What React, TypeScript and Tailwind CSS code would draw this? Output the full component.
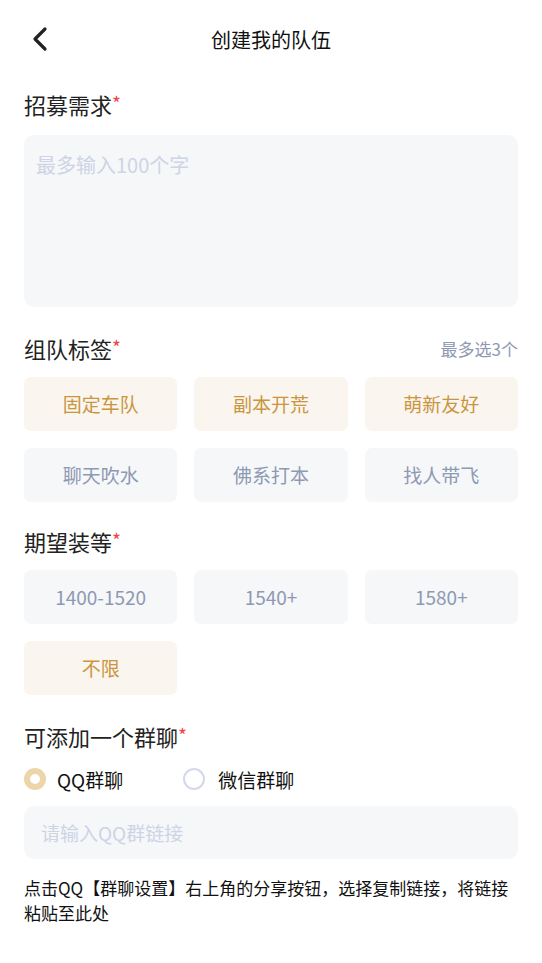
import React from "react";

const font = { fontFamily: '"Noto Sans CJK SC", "Noto Sans", sans-serif' };

function Tag({ label, active }: { label: string; active?: boolean }) {
  return (
    <div
      className={
        "h-[54px] rounded-[7px] flex items-center justify-center text-[19px] " +
        (active ? "bg-[#faf5ef] text-[#c9963f]" : "bg-[#f6f7f9] text-[#8e99b3]")
      }
    >
      {label}
    </div>
  );
}

function Title({ text }: { text: string }) {
  return (
    <div className="text-[22px] text-[#222] leading-none flex items-start">
      <span>{text}</span>
      <span className="text-[#f0444a] text-[19px] leading-none">*</span>
    </div>
  );
}

export default function App() {
  return (
    <div className="w-[542px] h-[963px] bg-white" style={font}>
      <div className="relative h-[80px] flex items-center justify-center">
        <svg className="absolute left-[30px] top-[26px]" width="20" height="26" viewBox="0 0 20 26">
          <path d="M15 3 L5 13 L15 23" fill="none" stroke="#222" strokeWidth="3.2" strokeLinecap="round" strokeLinejoin="round" />
        </svg>
        <div className="text-[20px] text-[#111] leading-none">创建我的队伍</div>
      </div>

      <div className="px-[24px]">
        <div className="mt-[13px]">
          <Title text="招募需求" />
        </div>
        <div className="mt-[20px] h-[172px] rounded-[10px] bg-[#f6f7f9] px-[12px] pt-[20px]">
          <div className="text-[20px] text-[#cdd4e6] leading-none">最多输入100个字</div>
        </div>

        <div className="mt-[30px] flex items-center justify-between">
          <Title text="组队标签" />
          <div className="text-[17px] text-[#8e99b3] leading-none">最多选3个</div>
        </div>
        <div className="mt-[18px] grid grid-cols-3 gap-x-[17px] gap-y-[17px]">
          <Tag label="固定车队" active />
          <Tag label="副本开荒" active />
          <Tag label="萌新友好" active />
          <Tag label="聊天吹水" />
          <Tag label="佛系打本" />
          <Tag label="找人带飞" />
        </div>

        <div className="mt-[28px]">
          <Title text="期望装等" />
        </div>
        <div className="mt-[18px] grid grid-cols-3 gap-x-[17px] gap-y-[17px]">
          <Tag label="1400-1520" />
          <Tag label="1540+" />
          <Tag label="1580+" />
          <Tag label="不限" active />
        </div>

        <div className="mt-[30px]">
          <Title text="可添加一个群聊" />
        </div>
        <div className="mt-[20px] flex items-center h-[24px]">
          <div className="w-[22px] h-[22px] rounded-full border-[6px] border-[#ecd5a9] bg-white" />
          <div className="ml-[11px] text-[19px] text-[#111] leading-none">QQ群聊</div>
          <div className="ml-[60px] w-[22px] h-[22px] rounded-full border-2 border-[#d3d9ea] bg-white" />
          <div className="ml-[13px] text-[19px] text-[#111] leading-none">微信群聊</div>
        </div>
        <div className="mt-[15px] h-[53px] rounded-[10px] bg-[#f6f7f9] px-[17px] flex items-center">
          <div className="text-[19px] text-[#cdd4e6] leading-none">请输入QQ群链接</div>
        </div>
        <div className="mt-[16px] text-[17px] text-[#111] leading-[25px]">
          点击QQ【群聊设置】右上角的分享按钮，选择复制链接，将链接粘贴至此处
        </div>
      </div>
    </div>
  );
}
